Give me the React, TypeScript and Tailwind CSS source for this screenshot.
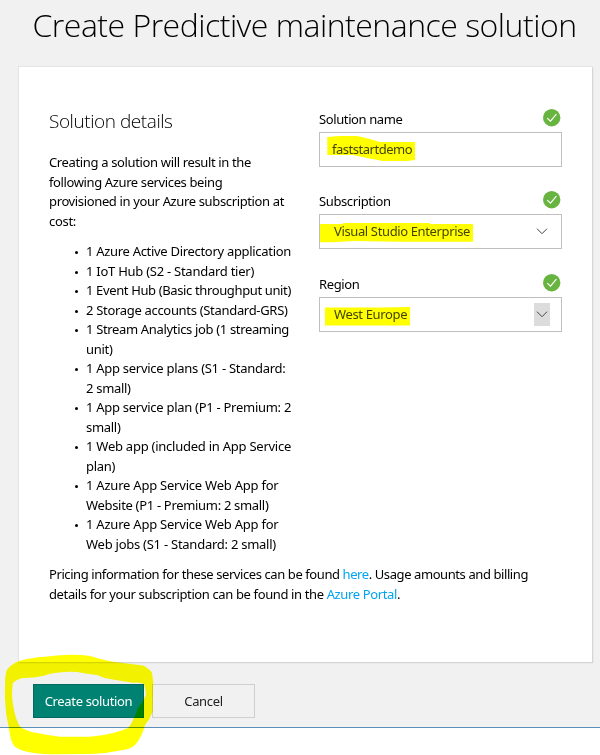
import type { ReactNode } from 'react';

type Line = { text: string; track: string };

const intro: Line[] = [
  { text: 'Creating a solution will result in the', track: 'tracking-[-0.355px]' },
  { text: 'following Azure services being', track: 'tracking-[-0.38px]' },
  { text: 'provisioned in your Azure subscription at', track: 'tracking-[-0.363px]' },
  { text: 'cost:', track: 'tracking-[-0.3px]' },
];

const services: Line[][] = [
  [{ text: '1 Azure Active Directory application', track: 'tracking-[-0.303px]' }],
  [{ text: '1 IoT Hub (S2 - Standard tier)', track: 'tracking-[-0.257px]' }],
  [{ text: '1 Event Hub (Basic throughput unit)', track: 'tracking-[-0.369px]' }],
  [{ text: '2 Storage accounts (Standard-GRS)', track: 'tracking-[-0.312px]' }],
  [
    { text: '1 Stream Analytics job (1 streaming', track: 'tracking-[-0.34px]' },
    { text: 'unit)', track: 'tracking-[-0.3px]' },
  ],
  [
    { text: '1 App service plans (S1 - Standard:', track: 'tracking-[-0.274px]' },
    { text: '2 small)', track: 'tracking-[-0.3px]' },
  ],
  [
    { text: '1 App service plan (P1 - Premium: 2', track: 'tracking-[-0.28px]' },
    { text: 'small)', track: 'tracking-[-0.3px]' },
  ],
  [
    { text: '1 Web app (included in App Service', track: 'tracking-[-0.247px]' },
    { text: 'plan)', track: 'tracking-[-0.3px]' },
  ],
  [
    { text: '1 Azure App Service Web App for', track: 'tracking-[-0.223px]' },
    { text: 'Website (P1 - Premium: 2 small)', track: 'tracking-[-0.316px]' },
  ],
  [
    { text: '1 Azure App Service Web App for', track: 'tracking-[-0.223px]' },
    { text: 'Web jobs (S1 - Standard: 2 small)', track: 'tracking-[-0.252px]' },
  ],
];

function TextLine({ text, track }: Line) {
  return <span className={`block whitespace-nowrap ${track}`}>{text}</span>;
}

function ValidMark() {
  return (
    <svg className="mr-[1px] h-[18px] w-[18px]" viewBox="0 0 18 18" fill="none">
      <circle cx="8.7" cy="8.7" r="8.7" fill="#68b441" />
      <path d="M4.2 9.1 7.5 12.2 13.4 5.2" stroke="#fff" strokeWidth="1.2" />
    </svg>
  );
}

function Chevron({ active = false }: { active?: boolean }) {
  return (
    <span
      className={`mr-[11px] flex h-[23px] w-4 items-center justify-center ${active ? 'bg-[#dcdcdc]' : ''}`}
    >
      <svg className="h-[7px] w-3" viewBox="0 0 12 7" fill="none">
        <path d="M1 .7 6 5.7 11 .7" stroke="#444" strokeWidth="1" />
      </svg>
    </span>
  );
}

function Field({ label, children }: { label: string; children: ReactNode }) {
  return (
    <div>
      <div className="flex h-[23px] items-start justify-between">
        <span className="pt-px tracking-[-0.39px]">{label}</span>
        <ValidMark />
      </div>
      <div className="flex h-[35px] items-center justify-between border border-[#bfbfbf] bg-white text-[#444]">
        {children}
      </div>
    </div>
  );
}

function Highlights() {
  return (
    <svg
      className="pointer-events-none absolute inset-0 h-[755px] w-[600px] mix-blend-multiply"
      viewBox="0 0 600 755"
      fill="#ffff00"
    >
      <path d="M327.3 137 340 136H357L368 138.5 380 142H415V160L407 161H383L367 158 353 155H327.3Z" />
      <path d="M320 224H343V223H430V224H473V241.7H400L353 241 332 242.3H320Z" />
      <path d="M325 307.5H382L410 307V325.5H325Z" />
      <path
        fillRule="evenodd"
        d="M6.7 670Q11 664 20 660.7 31 657.5 45 656.7 56 655 70 654.7 82 654.6 90 656 102 660 113 661.7L143 665.5Q149 668 152 673 154 682 153 690L152.7 711.7Q150 719 145 725 142 737 135 745 131 749 123 750 107 753.5 90 754L50 754.3Q37 754 27 751.7 19 750 14 746 10 739 9.3 730 5.5 715 5 700 4.8 686 5.3 677ZM12.7 683.3Q17 679 23 678 34 678 43 676 50 673 57 672.7 67 671.5 77 672 87 674 97 675 103 678 110 679 122 681 133 682.7 141 682 144 684.3 146 690 146 695 143 702 138 708 136 714 133 720 131 725 128 728 121 731 113 733 102 736 90 736.7H60Q47 735 37 733 26 731 20 726.7 16 720 14 710 12 701 12 693Z"
      />
    </svg>
  );
}

export default function App() {
  return (
    <div className="relative h-[755px] w-[600px] overflow-hidden bg-white font-['Noto_Sans','Open_Sans',sans-serif] text-[13px] leading-[19.5px] text-black">
      <main className="h-[728px] border-b border-[#5b8fbb] bg-[#f1f1f1]">
        <h1 className="h-[67px] pl-[32.5px] font-['Open_Sans','Noto_Sans',sans-serif] text-[32px] leading-[50px] font-light tracking-[-0.5px] whitespace-nowrap">
          Create Predictive maintenance solution
        </h1>

        <section className="ml-[19px] h-[595px] w-[573px] bg-white px-[30px] pt-[42px] shadow-[1px_1px_1px_0_#d4d4d4,0_0_1px_1px_#e6e6e6]">
          <div className="flex h-[456px] justify-between">
            <div className="w-[245px]">
              <h2 className="mb-5 font-['Open_Sans','Noto_Sans',sans-serif] text-[19px] leading-6 font-light tracking-[-0.44px]">
                Solution details
              </h2>
              <p className="mb-[11px]">
                {intro.map((line) => (
                  <TextLine key={line.text} {...line} />
                ))}
              </p>
              <ul className="pl-[26px]">
                {services.map((lines, i) => (
                  <li key={i} className="flex">
                    <span className="mt-[9px] mr-[8px] h-[3px] w-[3px] shrink-0 rounded-full bg-black" />
                    <span>
                      {lines.map((line) => (
                        <TextLine key={line.text} {...line} />
                      ))}
                    </span>
                  </li>
                ))}
              </ul>
            </div>

            <div className="w-[243px]">
              <Field label="Solution name">
                <span className="pl-[12px] tracking-[-0.48px]">faststartdemo</span>
              </Field>
              <div className="mt-6">
                <Field label="Subscription">
                  <span className="pt-px pl-[14px] tracking-[-0.367px]">Visual Studio Enterprise</span>
                  <Chevron />
                </Field>
              </div>
              <div className="mt-[25px]">
                <Field label="Region">
                  <span className="pt-px pl-[14px] tracking-[-0.35px]">West Europe</span>
                  <Chevron active />
                </Field>
              </div>
            </div>
          </div>

          <p className="whitespace-nowrap">
            <span className="block tracking-[-0.413px]">
              Pricing information for these services can be found <a className="text-[#00a4ef]">here</a>. Usage
              amounts and billing
            </span>
            <span className="block tracking-[-0.375px]">
              details for your subscription can be found in the <a className="text-[#00a4ef]">Azure Portal</a>.
            </span>
          </p>
        </section>

        <div className="mt-[22px] ml-[33px] flex gap-2">
          <button className="h-[34px] w-[111px] border border-[#006b5e] bg-[#008272] pt-px tracking-[-0.353px] whitespace-nowrap text-white">
            Create solution
          </button>
          <button className="h-[34px] w-[103px] border border-[#cfcfcf] pt-px tracking-[-0.33px] text-[#222]">
            Cancel
          </button>
        </div>
      </main>
      <Highlights />
    </div>
  );
}
